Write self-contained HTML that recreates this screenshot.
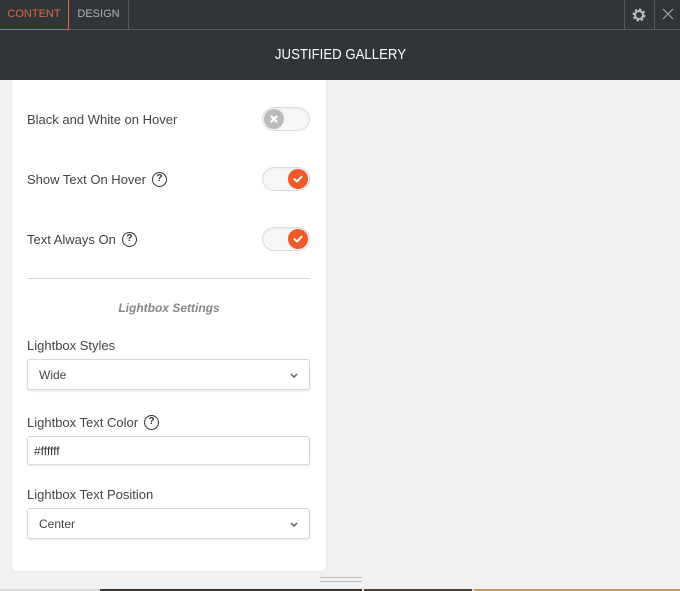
<!DOCTYPE html>
<html><head><style>
*{box-sizing:border-box;margin:0;padding:0}
body{width:680px;height:591px;background:#f1f1f1;font-family:"Liberation Sans",sans-serif;position:relative;overflow:hidden;color:#333}
.top{position:absolute;left:0;top:0;width:680px;height:30px;background:#2f3538;border-bottom:1px solid #555c60}
.tab{position:absolute;top:0;height:29px;line-height:29px;font-size:11px;text-align:center}
.hdr{position:absolute;top:30px;left:0;width:680px;height:50px;background:#2f3538;color:#fff;font-size:15px;text-align:center;line-height:50px}
.hdr span{display:inline-block;transform:scaleX(0.88)}
.panel{position:absolute;left:12px;top:80px;width:314px;height:491px;background:#fff;border-radius:0 0 4px 4px;box-shadow:0 0 2px rgba(0,0,0,.08)}
.lbl{position:absolute;left:27px;font-size:13px;color:#444;display:flex;align-items:center}
.q{display:inline-block;width:15px;height:15px;border:1.5px solid #333;border-radius:50%;font-size:10px;font-weight:bold;text-align:center;line-height:12px;margin-left:6px;color:#333}
.tg{position:absolute;left:262px;width:48px;height:24px;border-radius:12px;background:#f7f7f7;border:1px solid #dcdcdc;box-shadow:inset 0 1px 2px rgba(0,0,0,.05)}
.kn{position:absolute;top:1px;width:20px;height:20px;border-radius:50%}
.kn svg{position:absolute;left:5px;top:5px}
.sel{position:absolute;left:27px;width:283px;border:1px solid #d4d8da;border-radius:3px;background:#fff;box-shadow:0 1px 2px rgba(0,0,0,.1);font-size:12px;color:#444;padding-left:11px}
.chev{position:absolute;right:11px;top:50%;margin-top:-2px}
</style></head><body>
<div class="top">
<div class="tab" style="left:0;width:69px;color:#e8643c;border-right:1px solid #e8643c;height:30px;border-bottom:1px solid #e8643c">CONTENT</div>
<div class="tab" style="left:69px;width:60px;color:#b0b4b6;border-right:1px solid #555c60">DESIGN</div>
<div style="position:absolute;left:624px;top:0;width:1px;height:29px;background:#555c60"></div>
<div style="position:absolute;left:654px;top:0;width:1px;height:29px;background:#555c60"></div>
<svg style="position:absolute;left:631px;top:7px" width="16" height="16" viewBox="0 0 16 16"><circle cx="8" cy="8" r="5" fill="none" stroke="#b8bcbe" stroke-width="3" stroke-dasharray="2.2 1.7"/><circle cx="8" cy="8" r="4" fill="none" stroke="#b8bcbe" stroke-width="2"/></svg>
<svg style="position:absolute;left:662px;top:8px" width="12" height="12" viewBox="0 0 12 12"><path d="M1 1L11 11M11 1L1 11" stroke="#a0a4a6" stroke-width="1.2"/></svg>
</div>
<div class="hdr"><span>JUSTIFIED GALLERY</span></div>
<div class="panel"></div>
<div class="lbl" style="top:112px">Black and White on Hover</div>
<div class="tg" style="top:107px"><div class="kn" style="left:1px;background:#b8bcbe"><svg width="10" height="10" viewBox="0 0 10 10"><path d="M2.5 2.5L7.5 7.5M7.5 2.5L2.5 7.5" stroke="#fff" stroke-width="2.2" stroke-linecap="round"/></svg></div></div>
<div class="lbl" style="top:172px">Show Text On Hover<span class="q">?</span></div>
<div class="tg" style="top:167px"><div class="kn" style="left:25px;background:#f05a28"><svg width="10" height="10" viewBox="0 0 10 10"><path d="M1.5 5.2L4 7.5L8.5 2.8" fill="none" stroke="#fff" stroke-width="2" stroke-linecap="round" stroke-linejoin="round"/></svg></div></div>
<div class="lbl" style="top:232px">Text Always On<span class="q">?</span></div>
<div class="tg" style="top:227px"><div class="kn" style="left:25px;background:#f05a28"><svg width="10" height="10" viewBox="0 0 10 10"><path d="M1.5 5.2L4 7.5L8.5 2.8" fill="none" stroke="#fff" stroke-width="2" stroke-linecap="round" stroke-linejoin="round"/></svg></div></div>
<div style="position:absolute;left:27px;top:278px;width:283px;height:1px;background:#d8d8d8"></div>
<div style="position:absolute;left:12px;width:314px;top:301px;text-align:center;font-size:12px;font-style:italic;font-weight:bold;color:#888">Lightbox Settings</div>
<div class="lbl" style="top:338px">Lightbox Styles</div>
<div class="sel" style="top:359px;height:31px;line-height:30px">Wide<svg class="chev" width="8" height="5" viewBox="0 0 8 5"><path d="M1 1L4 4L7 1" fill="none" stroke="#555" stroke-width="1.4"/></svg></div>
<div class="lbl" style="top:415px">Lightbox Text Color<span class="q">?</span></div>
<div class="sel" style="top:436px;height:29px;line-height:28px;padding-left:6px;color:#333">#ffffff</div>
<div class="lbl" style="top:487px">Lightbox Text Position</div>
<div class="sel" style="top:508px;height:31px;line-height:31px">Center<svg class="chev" width="8" height="5" viewBox="0 0 8 5"><path d="M1 1L4 4L7 1" fill="none" stroke="#555" stroke-width="1.4"/></svg></div>
<div style="position:absolute;left:320px;top:577px;width:42px;height:5px;border-top:1px solid #bbb;border-bottom:1px solid #bbb"></div>
<div style="position:absolute;left:0;top:589px;width:680px;height:2px;background:#d8d8d8"></div>
<div style="position:absolute;left:100px;top:589px;width:262px;height:2px;background:#3a3530"></div>
<div style="position:absolute;left:364px;top:589px;width:108px;height:2px;background:#4a4038"></div>
<div style="position:absolute;left:474px;top:589px;width:206px;height:2px;background:#c09a60"></div>
</body></html>
